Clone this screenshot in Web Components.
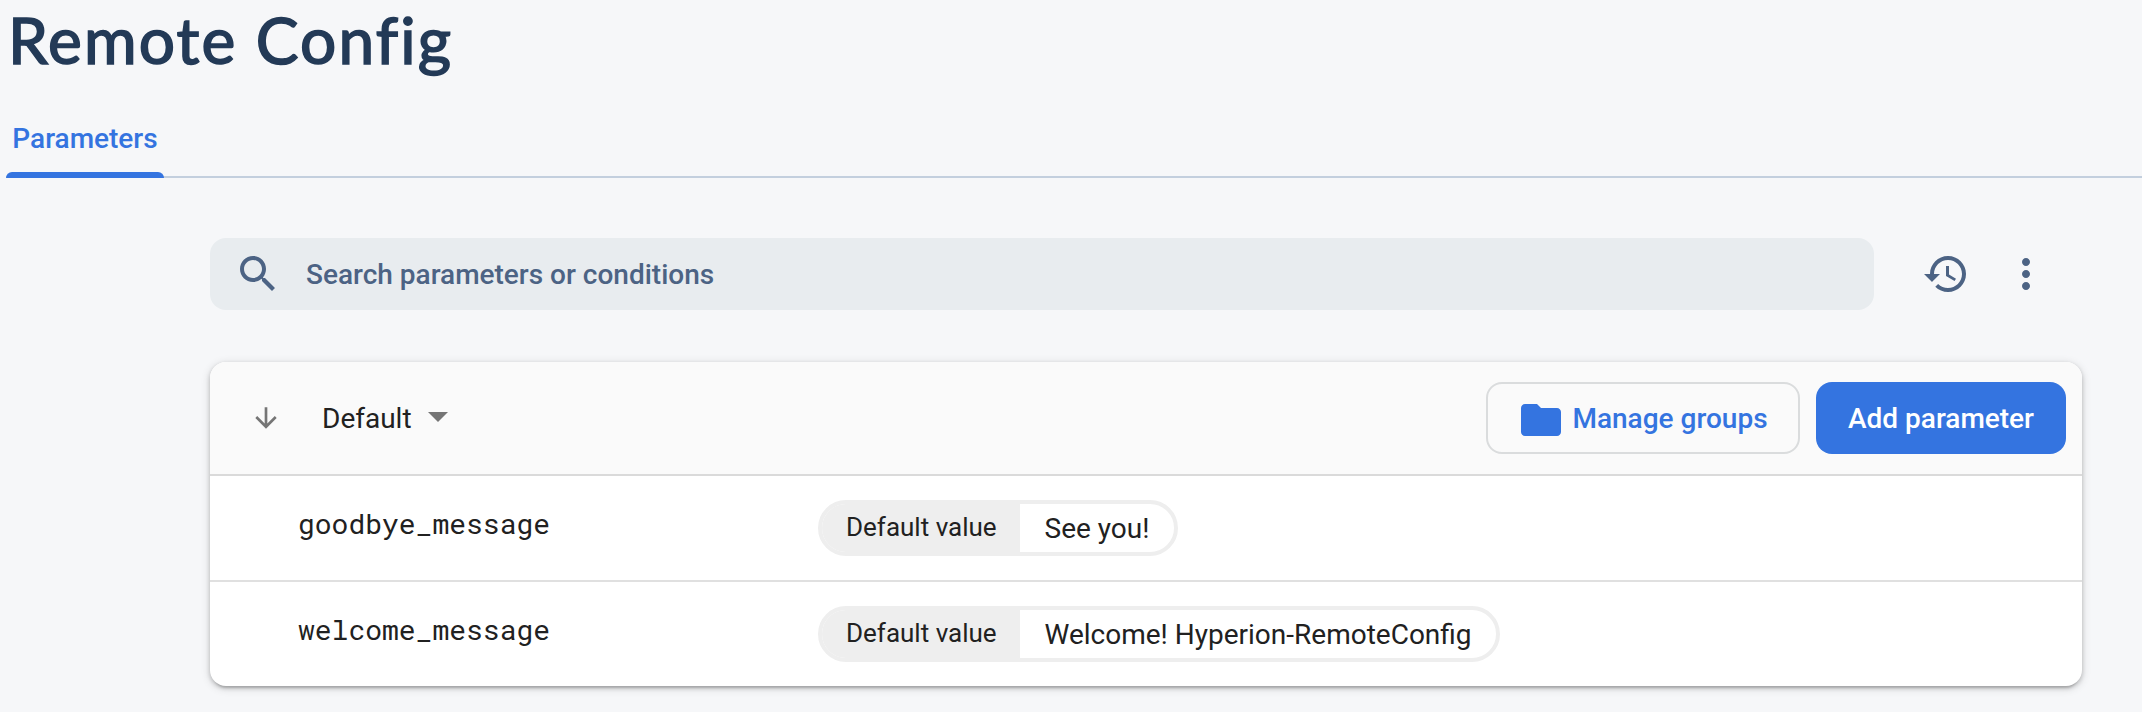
<!DOCTYPE html>
<html lang="en">
<head>
<meta charset="utf-8">
<title>Remote Config</title>
<style>
  html, body { margin: 0; height: 100%; }
  body { background: #f6f7f9; font-family: Roboto, "Liberation Sans", sans-serif; font-size: 28px; color: #212121; overflow: hidden; }
</style>
</head>
<body>
<rc-page>
  <rc-title slot="title">Remote Config</rc-title>
  <rc-tabs slot="tabs"><rc-tab>Parameters</rc-tab></rc-tabs>
  <rc-toolbar>
    <rc-search>Search parameters or conditions</rc-search>
    <rc-icon name="history" slot="actions"></rc-icon>
    <rc-icon name="more" slot="actions"></rc-icon>
  </rc-toolbar>
  <rc-card>
    <rc-sort slot="header">Default</rc-sort>
    <rc-button slot="header" kind="outline"><rc-icon name="folder" slot="icon"></rc-icon>Manage groups</rc-button>
    <rc-button slot="header" kind="filled">Add parameter</rc-button>
    <rc-row name="goodbye_message"><rc-chip label="Default value">See you!</rc-chip></rc-row>
    <rc-row name="welcome_message"><rc-chip label="Default value">Welcome! Hyperion-RemoteConfig</rc-chip></rc-row>
  </rc-card>
</rc-page>
<script>
const define = (name, html, setup) => {
  const template = document.createElement('template');
  template.innerHTML = html;
  customElements.define(name, class extends HTMLElement {
    constructor() {
      super();
      this.attachShadow({ mode: 'open' }).append(template.content.cloneNode(true));
    }
    connectedCallback() { if (setup) setup(this, this.shadowRoot); }
  });
};

define('rc-page', `
  <style>
    :host { display: block; height: 100%; }
    main { padding: 60px 60px 0 210px; }
  </style>
  <slot name="title"></slot><slot name="tabs"></slot><main><slot></slot></main>`);

define('rc-title', `
  <style>
    :host { display: block; height: 112px; }
    h1 { margin: 0; padding-left: 8px; font: 400 64px/80px Lato, sans-serif; color: #233a57; white-space: nowrap; }
    span { -webkit-text-stroke: 1.6px #233a57; letter-spacing: 2.1px; }
  </style>
  <h1><span><slot></slot></span></h1>`);

define('rc-tabs', `
  <style>
    :host { display: flex; height: 66px; margin-left: 6px;
            background: linear-gradient(#c3cfde, #c3cfde) bottom / 100% 2px no-repeat; }
  </style>
  <slot></slot>`);

define('rc-tab', `
  <style>
    :host { display: flex; flex-direction: column; width: 158px; color: #3474e0; font-weight: 500; }
    .label { flex: 1; text-align: center; line-height: 53px; }
    .bar { height: 6px; border-radius: 6px 6px 0 0; background: #3474e0; }
  </style>
  <div class="label"><slot></slot></div><div class="bar"></div>`);

const icons = {
  search: 'M15.5 14h-.79l-.28-.27C15.41 12.59 16 11.11 16 9.5 16 5.91 13.09 3 9.5 3S3 5.91 3 9.5 5.91 16 9.5 16c1.61 0 3.09-.59 4.23-1.57l.27.28v.79l5 4.99L20.49 19l-4.99-5zm-6 0C7.01 14 5 11.99 5 9.5S7.01 5 9.5 5 14 7.01 14 9.5 11.99 14 9.5 14z',
  history: 'M13 3c-4.97 0-9 4.03-9 9H1l3.89 3.89.07.14L9 12H6c0-3.87 3.13-7 7-7s7 3.13 7 7-3.13 7-7 7c-1.93 0-3.68-.79-4.94-2.06l-1.42 1.42C8.27 19.99 10.51 21 13 21c4.97 0 9-4.03 9-9s-4.03-9-9-9zm-1 5v5l4.28 2.54.72-1.21-3.5-2.08V8H12z',
  more: 'M12 8c1.1 0 2-.9 2-2s-.9-2-2-2-2 .9-2 2 .9 2 2 2zm0 2c-1.1 0-2 .9-2 2s.9 2 2 2 2-.9 2-2-.9-2-2-2zm0 6c-1.1 0-2 .9-2 2s.9 2 2 2 2-.9 2-2-.9-2-2-2z',
  folder: 'M10 4H4c-1.1 0-1.99.9-1.99 2L2 18c0 1.1.9 2 2 2h16c1.1 0 2-.9 2-2V8c0-1.1-.9-2-2-2h-8l-2-2z',
  down: 'M20 12l-1.41-1.41L13 16.17V4h-2v12.17l-5.58-5.59L4 12l8 8 8-8z'
};
define('rc-icon', `
  <style>
    :host { display: block; flex: none; width: 48px; height: 48px; }
    svg { display: block; width: 100%; height: 100%; fill: currentColor; }
  </style>
  <svg viewBox="0 0 24 24"><path/></svg>`,
  (el, root) => root.querySelector('path').setAttribute('d', icons[el.getAttribute('name')]));

define('rc-toolbar', `
  <style>
    :host { display: flex; align-items: center; gap: 32px; color: #4c6384; padding-right: 32px; }
    .actions { display: flex; gap: 32px; margin-left: 16px; }
  </style>
  <slot></slot><div class="actions"><slot name="actions"></slot></div>`);

define('rc-search', `
  <style>
    :host { display: flex; align-items: center; flex: 1; height: 72px; box-sizing: border-box;
            gap: 24px; padding-left: 24px; border-radius: 16px; background: #e8ecef; font-weight: 500; }
  </style>
  <rc-icon name="search"></rc-icon><span><slot></slot></span>`);

define('rc-card', `
  <style>
    :host { display: block; margin-top: 52px; border-radius: 16px; background: #fff;
            box-shadow: 0 6px 2px -4px rgba(0,0,0,.12), 0 2px 4px rgba(0,0,0,.18), 0 2px 10px rgba(0,0,0,.16); }
    header { display: flex; align-items: center; gap: 16px; height: 114px; box-sizing: border-box;
             padding-right: 16px; background: #fafafa; border-bottom: 2px solid #dadada; border-radius: 16px 16px 0 0; }
  </style>
  <header><slot name="header"></slot></header><slot></slot>`);

define('rc-sort', `
  <style>
    :host { display: flex; align-items: center; flex: 1; padding-left: 40px; }
    rc-icon { width: 32px; height: 32px; color: #757575; margin-right: 40px; }
    i { margin: -2px 0 0 16px; border: solid transparent; border-width: 10px 10px 0; border-top-color: #757575; }
  </style>
  <rc-icon name="down"></rc-icon><span><slot></slot></span><i></i>`);

define('rc-button', `
  <style>
    :host { display: flex; align-items: center; justify-content: center; height: 72px; box-sizing: border-box;
            border-radius: 16px; font-weight: 500; white-space: nowrap; }
    :host([kind=outline]) { width: 314px; padding-right: 1px; border: 2px solid #dadcdd; color: #3474e0; gap: 7px; }
    :host([kind=filled]) { width: 250px; background: #3474e0; color: #fff; }
    ::slotted(rc-icon) { margin-top: 4px; }
  </style>
  <slot name="icon"></slot><span><slot></slot></span>`);

define('rc-row', `
  <style>
    :host { display: grid; grid-template-columns: 520px 1fr; align-items: center; height: 104px; padding-left: 88px; }
    :host(:not(:last-child)) { border-bottom: 2px solid #e0e0e0; }
    .name { font-family: "Roboto Mono", "Liberation Mono", monospace; padding-bottom: 9px; }
  </style>
  <span class="name"></span><div><slot></slot></div>`,
  (el, root) => root.querySelector('.name').textContent = el.getAttribute('name'));

define('rc-chip', `
  <style>
    :host { display: flex; width: max-content; height: 56px; box-sizing: border-box; line-height: 49px;
            border: 4px solid #eee; border-radius: 28px; background: #fff; overflow: hidden; }
    .label { width: 198px; padding-left: 24px; box-sizing: border-box; background: #eee; font-size: 26px; line-height: 47px; }
    .value { padding: 0 24.5px 0 24.5px; }
  </style>
  <span class="label"></span><span class="value"><slot></slot></span>`,
  (el, root) => root.querySelector('.label').textContent = el.getAttribute('label'));
</script>
</body>
</html>
